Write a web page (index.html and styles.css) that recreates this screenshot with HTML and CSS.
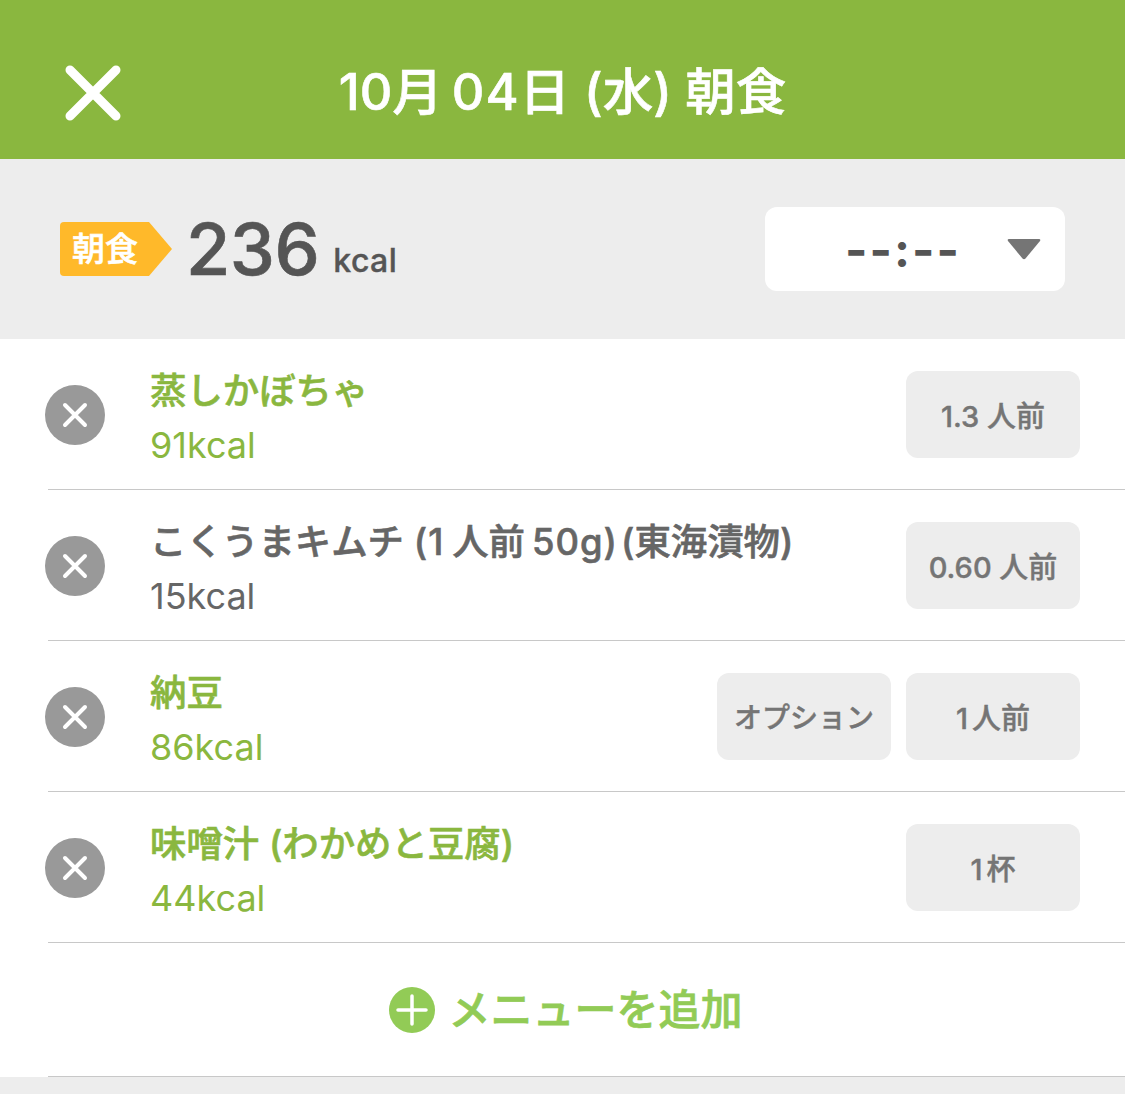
FILE: index.html
```html
<!DOCTYPE html>
<html lang="ja">
<head>
<meta charset="utf-8">
<title>朝食</title>
<link rel="stylesheet" href="styles.css">
</head>
<body>
<header class="topbar">
  <svg class="close" viewBox="0 0 56 56" width="56" height="56"><path d="M5 5 L51 51 M51 5 L5 51" stroke="#fff" stroke-width="9" stroke-linecap="round"/></svg>
  <h1 class="title">10月<span class="t-num">04</span>日<span class="t-paren">(水)</span> 朝食</h1>
</header>
<section class="summary">
  <div class="tag">
    <svg class="tag-bg" viewBox="0 0 112 54" width="112" height="54"><path d="M4 0 H89 L112 27 L89 54 H4 Q0 54 0 50 V4 Q0 0 4 0 Z" fill="#ffb92a"/></svg>
    <span class="tag-text">朝食</span>
  </div>
  <span class="kcal-num">236</span>
  <span class="kcal-unit">kcal</span>
  <div class="time">
    <span class="time-text">--:--</span>
    <svg class="caret" viewBox="0 0 34 22" width="34" height="22"><path d="M2 1 H32 Q34 1 33 3 L18.500 20.500 Q17 22 15.500 20.500 L1 3 Q0 1 2 1 Z" fill="#757575"/></svg>
  </div>
</section>
<ul class="list">
  <li class="row">
    <svg class="remove" viewBox="0 0 60 60" width="60" height="60"><circle cx="30" cy="30" r="30" fill="#999"/><path d="M20 20 L40 40 M40 20 L20 40" stroke="#fff" stroke-width="4" stroke-linecap="round"/></svg>
    <div class="info green"><div class="name">蒸しかぼちゃ</div><div class="cal">91kcal</div></div>
    <button class="chip">1.3 人前</button>
  </li>
  <li class="row">
    <svg class="remove" viewBox="0 0 60 60" width="60" height="60"><circle cx="30" cy="30" r="30" fill="#999"/><path d="M20 20 L40 40 M40 20 L20 40" stroke="#fff" stroke-width="4" stroke-linecap="round"/></svg>
    <div class="info"><div class="name">こくうまキムチ (<span class="one">1</span>人前<span class="fifty">50g)</span>(東海漬物)</div><div class="cal">15kcal</div></div>
    <button class="chip">0.60 人前</button>
  </li>
  <li class="row">
    <svg class="remove" viewBox="0 0 60 60" width="60" height="60"><circle cx="30" cy="30" r="30" fill="#999"/><path d="M20 20 L40 40 M40 20 L20 40" stroke="#fff" stroke-width="4" stroke-linecap="round"/></svg>
    <div class="info green"><div class="name">納豆</div><div class="cal">86kcal</div></div>
    <button class="chip option">オプション</button>
    <button class="chip tight">1 人前</button>
  </li>
  <li class="row">
    <svg class="remove" viewBox="0 0 60 60" width="60" height="60"><circle cx="30" cy="30" r="30" fill="#999"/><path d="M20 20 L40 40 M40 20 L20 40" stroke="#fff" stroke-width="4" stroke-linecap="round"/></svg>
    <div class="info green"><div class="name">味噌汁 <span class="paren">(わかめと豆腐)</span></div><div class="cal">44kcal</div></div>
    <button class="chip tight">1 杯</button>
  </li>
</ul>
<div class="add">
  <svg class="plus" viewBox="0 0 46 46" width="46" height="46"><circle cx="23" cy="23" r="23" fill="#92cb56"/><path d="M23 9 V37 M9 23 H37" stroke="#fff" stroke-width="3.500" stroke-linecap="round"/></svg>
  <span class="add-text">メニューを追加</span>
</div>
```
FILE: styles.css
```css
* { box-sizing: border-box; }
html, body { margin: 0; padding: 0; }
body {
  width: 1125px;
  height: 1094px;
  overflow: hidden;
  background: #ededed;
  font-family: "Inter", "Noto Sans CJK JP", sans-serif;
}
.topbar {
  height: 159px;
  background: #8ab73f;
  display: flex;
  align-items: center;
  justify-content: center;
  position: relative;
}
.close { position: absolute; left: 65px; top: 65px; }
.title {
  margin: 0;
  color: #fff;
  font-size: 50.5px;
  font-weight: 500;
  -webkit-text-stroke: 0.6px #fff;
  line-height: 1;
  position: relative;
  top: 13px;
}
.t-num { margin-left: 9px; letter-spacing: 1px; }
.t-paren { margin-left: 14px; }
.summary {
  height: 180px;
  padding: 48px 60px 0;
  display: flex;
  align-items: flex-start;
  background: #ededed;
}
.tag {
  width: 112px;
  height: 54px;
  margin-top: 15px;
  position: relative;
  display: flex;
  align-items: center;
}
.tag-bg { position: absolute; left: 0; top: 0; }
.tag-text {
  position: relative;
  color: #fff;
  font-size: 33px;
  font-weight: 500;
  -webkit-text-stroke: 0.6px #fff;
  line-height: 54px;
  margin-left: 12px;
}
.kcal-num {
  margin-left: 14px;
  font-size: 72px;
  font-weight: 500;
  -webkit-text-stroke: 0.6px #555;
  line-height: 84px;
  color: #555;
  letter-spacing: -0.5px;
}
.kcal-unit {
  margin-left: 14px;
  margin-top: 34px;
  font-size: 32px;
  font-weight: 500;
  -webkit-text-stroke: 0.4px #555;
  line-height: 40px;
  color: #555;
  letter-spacing: 0.4px;
}
.time {
  margin-left: auto;
  width: 300px;
  height: 84px;
  background: #fff;
  border-radius: 12px;
  position: relative;
  display: flex;
  align-items: center;
  justify-content: center;
}
.time-text {
  font-size: 48px;
  font-weight: 700;
  color: #555;
  letter-spacing: 2px;
  position: relative;
  left: -12px;
}
.caret { position: absolute; right: 24px; top: 31px; }
.list {
  list-style: none;
  margin: 0;
  padding: 0;
  background: #fff;
}
.row {
  height: 151px;
  padding: 0 45px;
  display: flex;
  align-items: center;
  gap: 15px;
  position: relative;
}
.row::after {
  content: "";
  position: absolute;
  left: 48px;
  right: 0;
  bottom: 0;
  height: 1px;
  background: #c8c8c8;
}
.remove { flex: none; margin-right: 30px; }
.info { flex: 1; min-width: 0; margin-top: 6px; color: #666; }
.info.green { color: #8ab73f; }
.name {
  font-size: 36.4px;
  font-weight: 500;
  -webkit-text-stroke: 0.6px currentColor;
  line-height: 52px;
  white-space: nowrap;
}
.one { margin: 0 9px 0 1px; }
.fifty { margin-left: 7px; margin-right: 3px; letter-spacing: 1px; }
.paren { margin-left: 0; }
.cal {
  font-size: 36px;
  font-weight: 400;
  line-height: 52px;
  margin-top: 2px;
}
.chip {
  flex: none;
  width: 174px;
  height: 87px;
  margin-top: -1px;
  border: 0;
  border-radius: 12px;
  background: #ededed;
  color: #757575;
  font-family: inherit;
  font-size: 29px;
  font-weight: 500;
  -webkit-text-stroke: 0.4px #757575;
  padding: 0;
}
.chip.option { font-size: 28px; }
.chip.tight { word-spacing: -4px; }
.add {
  height: 134px;
  padding-left: 7px;
  background: #fff;
  display: flex;
  align-items: center;
  justify-content: center;
  gap: 13px;
  position: relative;
}
.add::after {
  content: "";
  position: absolute;
  left: 48px;
  right: 0;
  bottom: 0;
  height: 1px;
  background: #c8c8c8;
}
.plus { flex: none; }
.add-text {
  font-size: 42px;
  font-weight: 500;
  -webkit-text-stroke: 0.7px #92cb56;
  color: #92cb56;
  line-height: 56px;
}
```
